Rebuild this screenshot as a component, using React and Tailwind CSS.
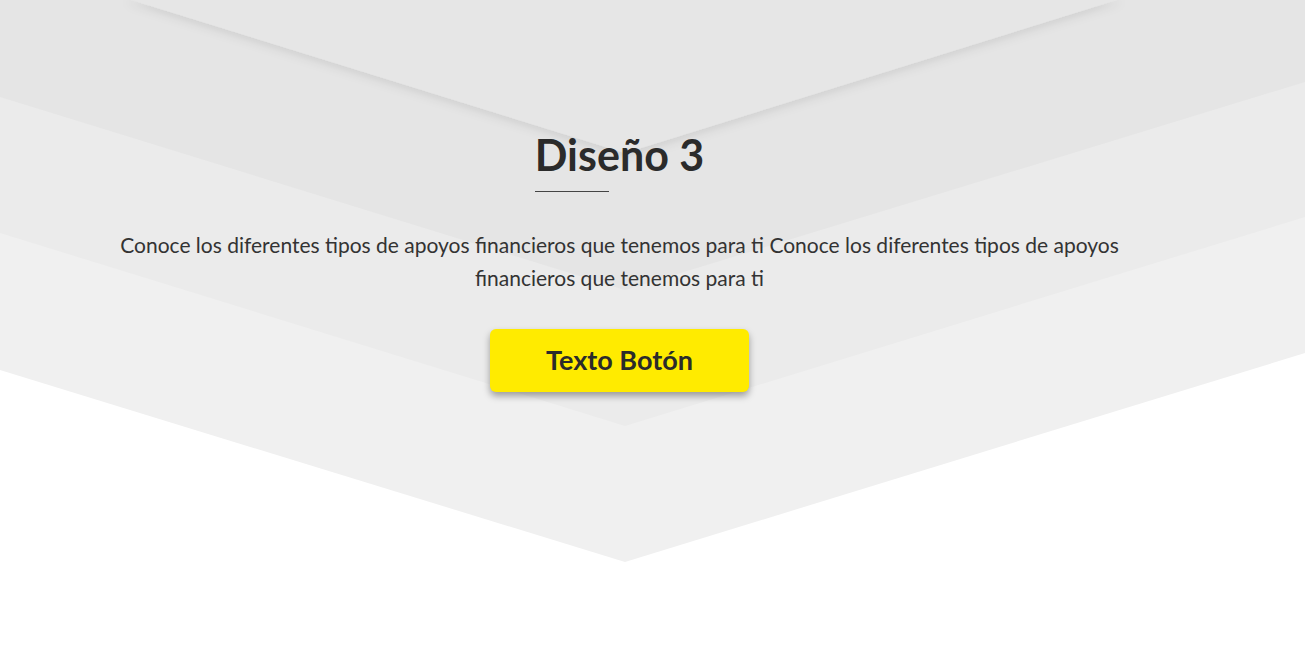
import React from 'react';

// chevron backdrop, layered from light (outside) to darker (inside)
function Backdrop() {
    return (<svg className="absolute inset-0 h-full w-full" viewBox="0 0 1305 663" preserveAspectRatio="none">
      <defs>
        <filter id="soft" x="-10%" y="-20%" width="120%" height="160%">
          <feDropShadow dx="0" dy="4" stdDeviation="5" floodColor="#000" floodOpacity="0.09"/>
        </filter>
      </defs>
      <polygon points="0,0 1305,0 1305,353 625,562 0,370" fill="#f0f0f0"/>
      <polygon points="0,0 1305,0 1305,217 625,426 0,233" fill="#ebebeb"/>
      <polygon points="0,0 1305,0 1305,82 625,290 0,97" fill="#e5e5e5"/>
      <polygon points="125,-2 625,153 1123,-2" fill="#e6e6e6" filter="url(#soft)"/>
    </svg>);
}

export default function App() {
    return (<div className="relative h-[663px] w-full overflow-hidden bg-white" style={{ fontFamily: 'Lato, "Noto Sans", sans-serif' }}>
      <Backdrop />
      <div className="relative flex w-[1239px] flex-col items-center pt-[129px]">
        <div className="inline-flex flex-col items-start">
          <h1 className="text-[43px] font-bold leading-[1.2] text-[#2b2b2b]">Diseño 3</h1>
          <div className="mt-[10px] h-px w-[74px] bg-[#444]"/>
        </div>
        <p className="mt-[36px] w-[1010px] text-center text-[21px] leading-[33px] text-[#333]">
          Conoce los diferentes tipos de apoyos financieros que tenemos para ti Conoce los diferentes tipos de apoyos financieros que tenemos para ti
        </p>
        <button className="mt-[35px] flex h-[63px] w-[259px] items-center justify-center rounded-[6px] bg-[#ffeb00] text-[27px] font-bold text-[#2b2b2b] shadow-[0_4px_7px_rgba(0,0,0,0.35)]">
          Texto Botón
        </button>
      </div>
    </div>);
}
